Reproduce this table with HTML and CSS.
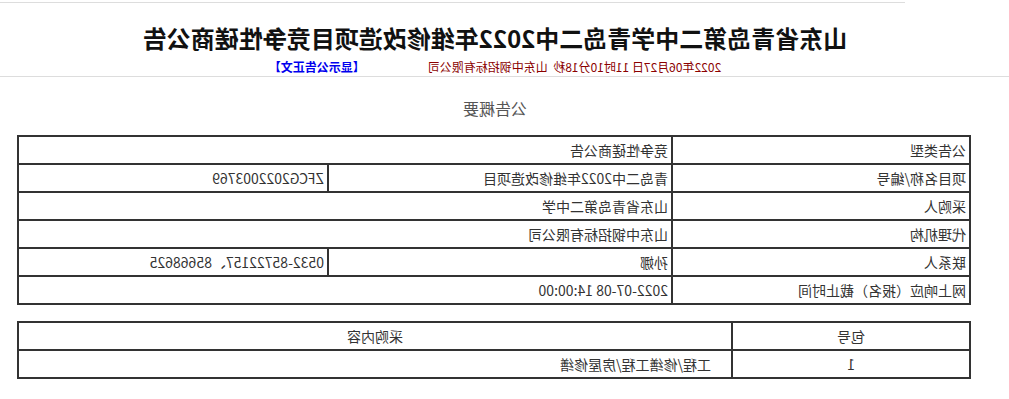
FILE: index.html
```html
<!DOCTYPE html>
<html lang="zh-CN">
<head>
<meta charset="utf-8">
<title>竞争性磋商公告</title>
<link rel="stylesheet" href="styles.css">
</head>
<body>
<div class="page">
  <div class="topline"></div>
  <div class="wrap">
    <h1 class="title">山东省青岛第二中学青岛二中2022年维修改造项目竞争性磋商公告</h1>
    <div class="meta">
      <span class="date">2022年06月27日 11时10分18秒&nbsp;&nbsp;山东中钢招标有限公司</span>
      <a class="show" href="#">【显示公告正文】</a>
    </div>
  </div>
  <div class="divider"></div>
  <div class="wrap">
    <div class="summary">公告概要</div>
    <table class="info">
      <colgroup><col class="c1"><col class="c2"><col class="c3"></colgroup>
      <tr><td>公告类型</td><td colspan="2">竞争性磋商公告</td></tr>
      <tr><td>项目名称/编号</td><td>青岛二中2022年维修改造项目</td><td>ZFCG2022003769</td></tr>
      <tr><td>采购人</td><td colspan="2">山东省青岛第二中学</td></tr>
      <tr><td>代理机构</td><td colspan="2">山东中钢招标有限公司</td></tr>
      <tr><td>联系人</td><td>孙娜</td><td>0532-85722157、85668625</td></tr>
      <tr><td>网上响应（报名）截止时间</td><td colspan="2">2022-07-08 14:00:00</td></tr>
    </table>
    <table class="pkg">
      <colgroup><col class="p1"><col class="p2"></colgroup>
      <tr><th>包号</th><th>采购内容</th></tr>
      <tr><td class="num">1</td><td class="content">工程/修缮工程/房屋修缮</td></tr>
    </table>
  </div>
</div>
</body>
</html>
```

FILE: styles.css
```css
html, body {
  margin: 0;
  padding: 0;
  background: #fff;
}
body {
  width: 1009px;
  height: 399px;
  overflow: hidden;
  transform: scaleX(-1);
  transform-origin: 504.5px 0;
  font-family: "Noto Sans CJK SC", "Noto Sans", sans-serif;
  color: #333;
}
.page {
  padding-top: 2px;
}
.topline {
  margin-left: 104px;
  border-top: 1px solid #ddd;
}
.wrap {
  margin-left: 19px;
  width: 990px;
}
.title {
  margin: 19px 0 0;
  font-size: 24px;
  line-height: 32px;
  font-weight: bold;
  color: #111;
  text-align: center;
  letter-spacing: 0;
}
.meta {
  margin-top: 5px;
  height: 16px;
  line-height: 16px;
  font-size: 12px;
  display: flex;
  justify-content: center;
  gap: 63px;
}
.date {
  color: #8b0000;
  white-space: pre;
}
.show {
  color: #0000ee;
  font-weight: bold;
  text-decoration: none;
}
.divider {
  margin-top: 1px;
  border-top: 1px solid #ddd;
}
.summary {
  margin-top: 19px;
  font-size: 16px;
  line-height: 24px;
  color: #555;
  text-align: center;
}
table {
  border-collapse: collapse;
  margin-left: 19px;
  width: 952px;
  table-layout: fixed;
  font-size: 14px;
  color: #333;
}
.info {
  margin-top: 15px;
}
.pkg {
  margin-top: 16px;
}
td, th {
  border: 2px solid #333;
  height: 26px;
  padding: 0 3px;
  line-height: 26px;
  white-space: nowrap;
  text-align: left;
  font-weight: normal;
  box-sizing: border-box;
}
tr { height: 28px; }
.c1 { width: 298px; }
.c2 { width: 344px; }
.c3 { width: 310px; }
.p1 { width: 238px; }
.p2 { width: 714px; }
.pkg th { text-align: center; }
.pkg .num { text-align: center; }
.pkg .content { padding-left: 20px; }
```
